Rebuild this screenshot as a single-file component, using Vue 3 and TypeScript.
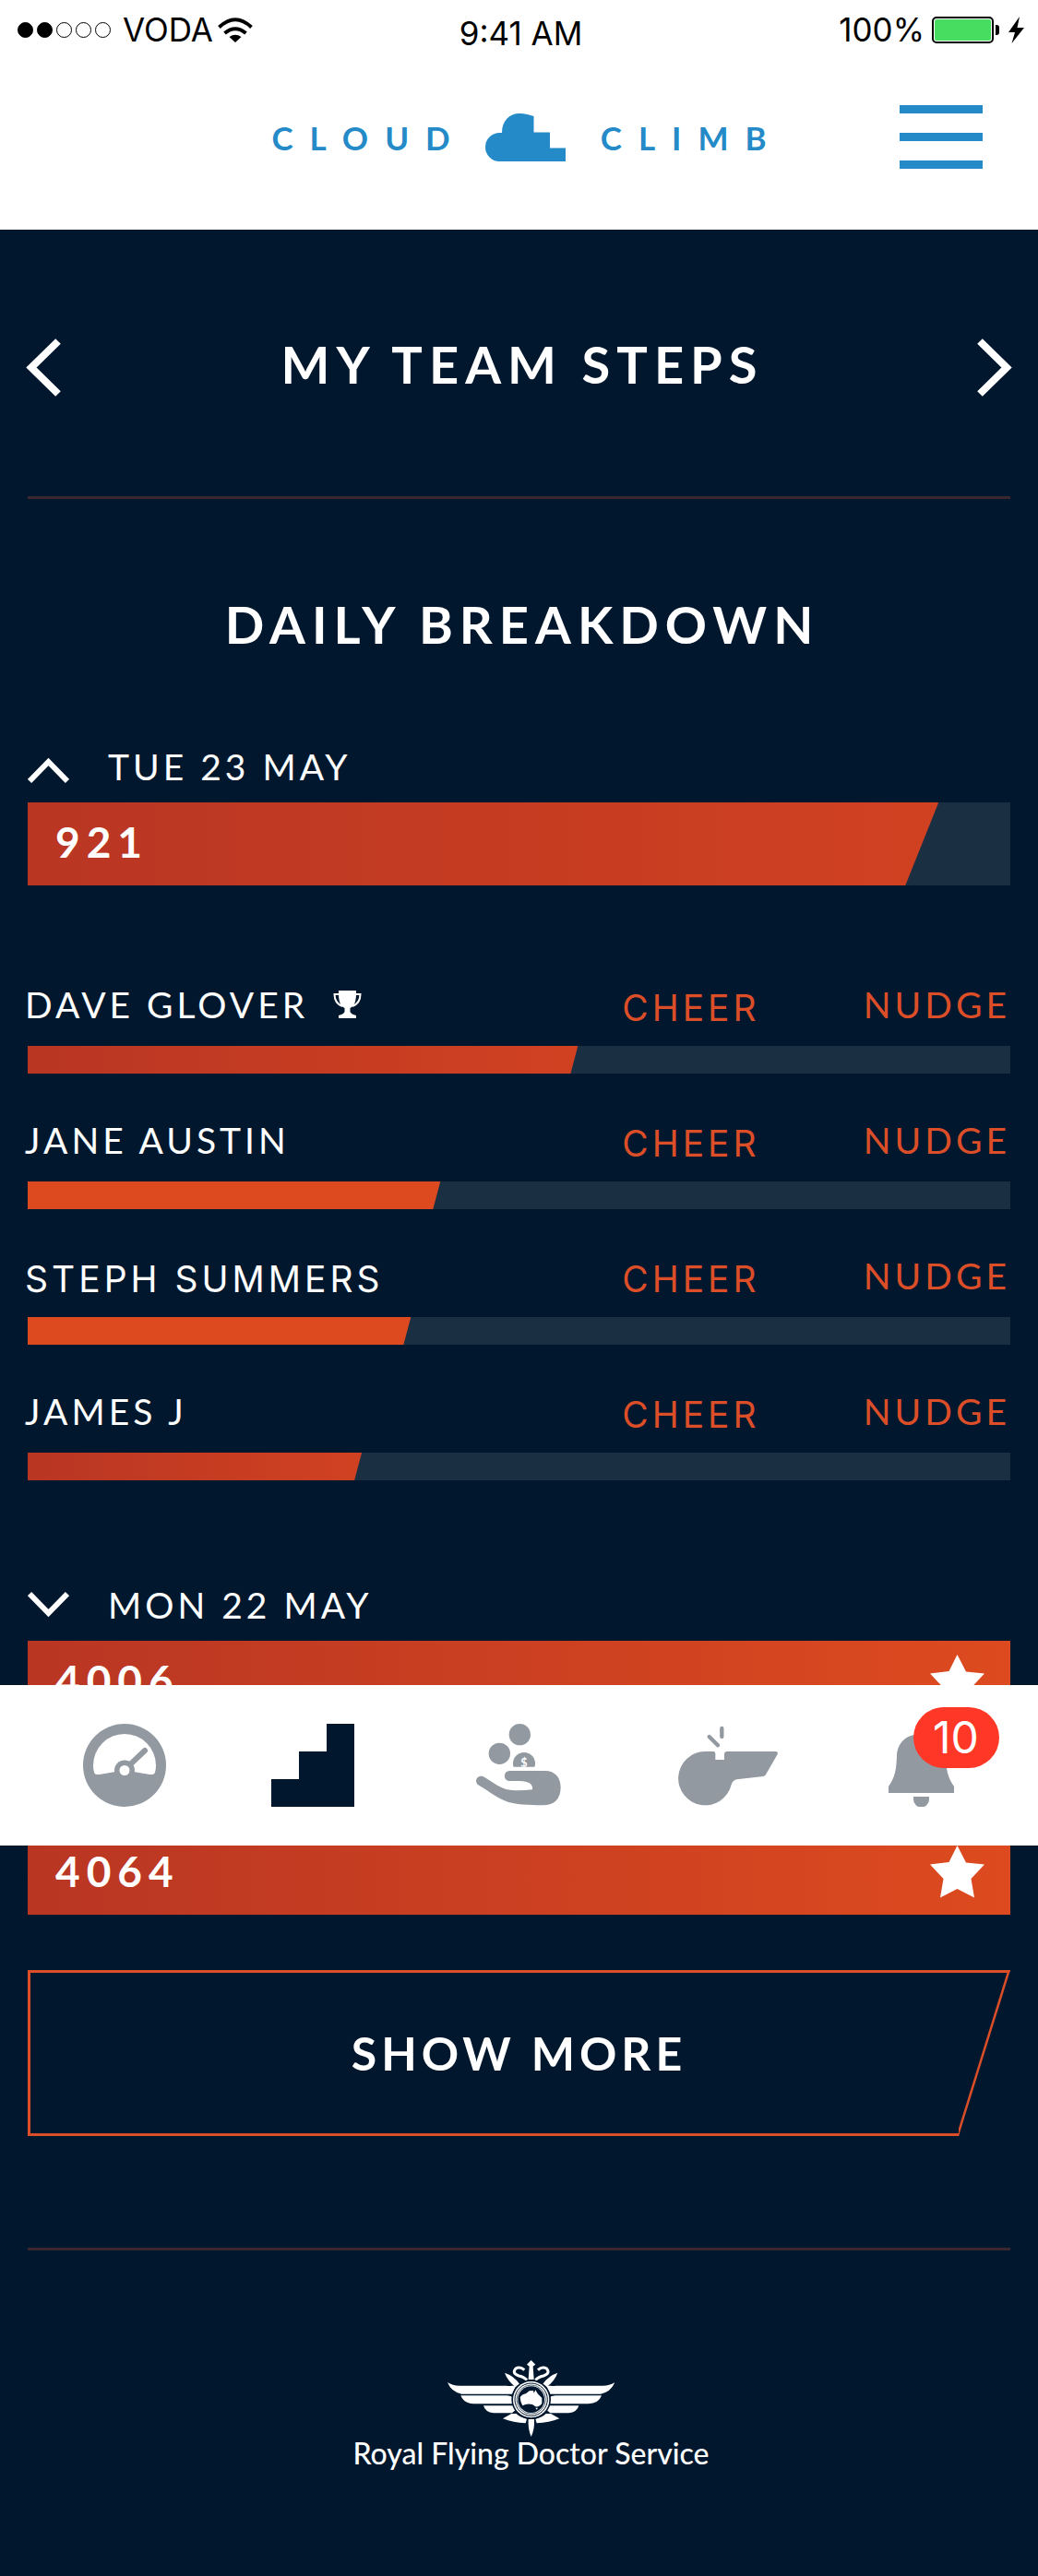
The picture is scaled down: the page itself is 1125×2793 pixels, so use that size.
<script setup lang="ts">
interface Member {
  name: string
  share: number
  leader?: boolean
  solid?: boolean
  system?: boolean
}

interface Day {
  date?: string
  steps: number
}

const signal: boolean[] = [true, true, false, false, false]

const today = { date: 'TUE 23 MAY', steps: 921, share: 92.7 }

const members: Member[] = [
  { name: 'DAVE GLOVER', share: 56, leader: true },
  { name: 'JANE AUSTIN', share: 42, solid: true },
  { name: 'STEPH SUMMERS', share: 39, solid: true, system: true },
  { name: 'JAMES J', share: 34 },
]

const monday: Day = { date: 'MON 22 MAY', steps: 4006 }
const earlier: Day = { steps: 4064 }

const starPoints =
  '29.5,0 39,18.5 59,20.5 44.5,36 48,56.5 29.5,47 11,56.5 14.5,36 0,20.5 20.5,18'
</script>

<template>
  <div class="app">
    <header class="top">
      <div class="status">
        <div class="status-left">
          <span class="signal">
            <i v-for="(on, i) in signal" :key="i" class="dot" :class="{ on }"></i>
          </span>
          <span class="carrier">VODA</span>
          <svg class="wifi" width="38" height="27" viewBox="0 0 38 27" fill="none" stroke="#000" stroke-width="4" aria-hidden="true">
            <path d="M1.5 10.5Q19-6 36.500 10.500" />
            <path d="M7.500 17Q19 7.500 30.500 17" />
            <path d="M12.500 21Q19 16.500 25.500 21L19 27Z" fill="#000" stroke="none" />
          </svg>
        </div>
        <div class="time">9:41 AM</div>
        <div class="status-right">
          <span>100%</span>
          <svg class="battery" width="75" height="29" viewBox="0 0 75 29" aria-hidden="true">
            <rect x="1" y="1" width="65" height="27" rx="4" fill="#fff" stroke="#000" stroke-width="2" />
            <rect x="3" y="3" width="61" height="23" rx="2" fill="#47dd60" />
            <path d="M69 9H70Q73 9 73 12V17Q73 20 70 20H69Z" fill="#000" />
          </svg>
          <svg class="bolt" width="17" height="29" viewBox="0 0 17 29" aria-hidden="true">
            <path d="M12 0L0 17H7L3.500 29L17 12H9.500Z" />
          </svg>
        </div>
      </div>
      <div class="brand-row">
        <a class="brand" href="#home" aria-label="Cloud Climb">
          <span>CLOUD</span>
          <svg class="cloud" width="87" height="52" viewBox="0 0 87 52" fill="#248ac8" aria-hidden="true">
            <path d="M15.500 52A15.500 15.500 0 0 1 15.500 21H18C18 8 26 0 37 0C43 0 48 1.500 52.500 3V20.500H70V37.500H87V52Z" />
          </svg>
          <span>CLIMB</span>
        </a>
        <button class="menu" type="button" aria-label="Menu">
          <i></i><i></i><i></i>
        </button>
      </div>
    </header>

    <main class="content">
      <div class="title-row">
        <button type="button" aria-label="Previous">
          <svg width="38" height="63" viewBox="0 0 38 63" fill="none" stroke="#fff" stroke-width="8">
            <path d="M35 3L6 31.500L35 60" />
          </svg>
        </button>
        <h1>MY TEAM STEPS</h1>
        <button type="button" aria-label="Next">
          <svg width="38" height="63" viewBox="0 0 38 63" fill="none" stroke="#fff" stroke-width="8">
            <path d="M3 3L32 31.500L3 60" />
          </svg>
        </button>
      </div>

      <hr />

      <h2>DAILY BREAKDOWN</h2>

      <section>
        <button class="day-head" type="button" aria-expanded="true">
          <svg width="45" height="48" viewBox="0 0 45 48" fill="none" stroke="#fff" stroke-width="6">
            <path d="M2 40L22.500 19L43 40" />
          </svg>
          <span>{{ today.date }}</span>
        </button>
        <div class="total">
          <div class="total-fill partial" :style="{ width: today.share + '%' }"></div>
          <span class="steps">{{ today.steps }}</span>
        </div>

        <ul class="members">
          <li v-for="m in members" :key="m.name">
            <div class="member-line">
              <span class="name" :class="{ system: m.system }">
                {{ m.name }}
                <svg v-if="m.leader" class="trophy" width="31" height="30" viewBox="0 0 31 30" aria-hidden="true">
                  <path fill="#fff" d="M6 0H25V3C25 12 23 17 18.500 19V23C19 25 22 26 25 27V30H6V27C9 26 12 25 12.500 23V19C8 17 6 12 6 3Z" />
                  <path fill="none" stroke="#fff" stroke-width="2" d="M7 4H1.500C1.500 11 5 15 10 17M24 4H29.500C29.500 11 26 15 21 17" />
                </svg>
              </span>
              <button class="action system" type="button">CHEER</button>
              <button class="action" type="button">NUDGE</button>
            </div>
            <div class="track">
              <div class="fill" :class="{ solid: m.solid }" :style="{ width: m.share + '%' }"></div>
            </div>
          </li>
        </ul>
      </section>

      <section class="past">
        <button class="day-head" type="button" aria-expanded="false">
          <svg width="45" height="48" viewBox="0 0 45 48" fill="none" stroke="#fff" stroke-width="6">
            <path d="M2 12L22.500 33L43 12" />
          </svg>
          <span>{{ monday.date }}</span>
        </button>
        <div class="total">
          <div class="total-fill full"></div>
          <span class="steps">{{ monday.steps }}</span>
          <svg class="star" width="60" height="57" viewBox="0 0 60 57" aria-hidden="true"><polygon fill="#fff" :points="starPoints" /></svg>
        </div>
      </section>

      <nav class="tabs" aria-label="Main">
        <a href="#dashboard" aria-label="Dashboard">
          <svg width="90" height="90" viewBox="0 0 90 90">
            <circle cx="45" cy="45" r="45" fill="#9299a1" />
            <path fill="#fff" d="M11 45A34 34 0 0 1 79 45Q79 55 75 55Q72 55.500 45 50Q18 55.500 15 55Q11 55 11 45Z" />
            <path d="M47 48L67 29" stroke="#9299a1" stroke-width="6" stroke-linecap="round" />
            <circle cx="45" cy="50.500" r="11" fill="#9299a1" />
            <circle cx="45" cy="50.500" r="5.500" fill="#fff" />
          </svg>
        </a>
        <a href="#steps" aria-label="Steps" aria-current="page">
          <svg width="90" height="90" viewBox="0 0 90 90"><path fill="#00172d" d="M0 90V60H30V30H60V0H90V90Z" /></svg>
        </a>
        <a href="#donate" aria-label="Donate">
          <svg width="92" height="90" viewBox="48 57 276 270" fill="#9299a1">
            <defs><clipPath id="coin-cut"><rect x="160" y="140" width="90" height="57" /></clipPath></defs>
            <circle cx="190" cy="92" r="35" />
            <circle cx="124" cy="154" r="35" />
            <g clip-path="url(#coin-cut)">
              <circle cx="204" cy="186" r="36" />
              <text x="204" y="198" class="coin" text-anchor="middle" fill="#fff">$</text>
            </g>
            <path d="M157 210H272C305 210 323 232 323 264C323 300 303 322 265 322C220 321 175 322 140 307C110 294 80 270 55 256C40 244 52 222 70 228C95 242 120 262 145 270C172 276 200 274 231 271C233 254 222 244 190 243H157A16.500 16.500 0 0 1 157 210Z" />
          </svg>
        </a>
        <a href="#challenges" aria-label="Challenges">
          <svg width="108" height="90" viewBox="705 57 324 270" fill="#9299a1">
            <path d="M792 147H820Q826 148 826 154V174H855V154Q856 148 862 147H1022Q1031 148 1028 156L990 222Q988 227 982 228L895 238Q882 241 878 255A87.500 87.500 0 1 1 792 147Z" />
            <path d="M847 72V99M806 99L834 127" fill="none" stroke="#9299a1" stroke-width="13" stroke-linecap="round" />
          </svg>
        </a>
        <a href="#alerts" aria-label="Notifications">
          <span class="bell">
            <svg width="71" height="90" viewBox="0 0 71 90" fill="#9299a1">
              <path d="M0 75V68C7 58 8.500 50 9 34C10 20 20 11 35.500 11S61 20 62 34C62.500 50 64 58 71 68V75Z" />
              <path d="M27 79H44V82A8.500 8.500 0 0 1 27 82Z" />
            </svg>
            <span class="badge">10</span>
          </span>
        </a>
      </nav>

      <section>
        <div class="total">
          <div class="total-fill full"></div>
          <span class="steps">{{ earlier.steps }}</span>
          <svg class="star" width="60" height="57" viewBox="0 0 60 57" aria-hidden="true"><polygon fill="#fff" :points="starPoints" /></svg>
        </div>
      </section>

      <button class="more" type="button">SHOW MORE</button>

      <hr class="foot-rule" />

      <footer>
        <svg width="181" height="83" viewBox="406 87 543 249" fill="#fff" aria-hidden="true">
          <defs>
            <g id="wing">
              <path d="M406 159Q422 170 445 170H598Q612 172 630 168L616 197H452Q418 190 406 159Z" />
              <path d="M449 202H600Q612 203 620 208V229H492Q458 228 449 202Z" />
              <path d="M523 235H620L630 247L616 259H556Q528 256 523 235Z" />
              <path d="M614 261L586 277Q620 290 660 292L664 278Q640 272 630 261Z" />
              <path d="M592 128Q622 138 640 164L628 174Q602 156 592 128Z" />
              <path d="M656 119Q642 106 628 114Q614 130 638 138Q656 142 664 152" fill="none" stroke="#fff" stroke-width="9" />
            </g>
          </defs>
          <use href="#wing" />
          <use href="#wing" transform="translate(1356 0) scale(-1 1)" />
          <path d="M678 87L692 101L684 107L687 150H669L672 107L664 101Z" />
          <path d="M669 279H688Q690 310 678 336Q667 310 669 279Z" />
          <circle cx="678" cy="215" r="64" fill="#00172d" />
          <circle cx="678" cy="215" r="59" />
          <circle cx="678" cy="215" r="53" fill="none" stroke="#00172d" stroke-width="3" />
          <circle cx="678" cy="215" r="47" fill="none" stroke="#00172d" stroke-width="2" />
          <circle cx="678" cy="215" r="43" fill="#00172d" />
          <path d="M642 208Q648 198 662 195L672 187L685 186L687 194L692 184L699 196L713 210V228Q704 240 692 238L682 231Q664 226 650 235Q643 224 642 208ZM692 242H700L696 248Z" />
        </svg>
        <p>Royal Flying Doctor Service</p>
      </footer>
    </main>
  </div>
</template>

<style>
html,
body {
  margin: 0;
  background: #00172d;
}
</style>

<style scoped>
.app {
  font-family: Lato, "Open Sans", sans-serif;
  color: #fff;
  background: #00172d;
}
.app button {
  appearance: none;
  margin: 0;
  padding: 0;
  border: 0;
  background: none;
  color: inherit;
  font: inherit;
  cursor: pointer;
}
svg {
  display: block;
  flex: none;
}
a {
  color: inherit;
  text-decoration: none;
}
.top {
  background: #fff;
  color: #000;
}
.status {
  display: grid;
  grid-template-columns: 1fr auto 1fr;
  align-items: start;
  height: 64px;
  padding: 0 15px 0 19px;
  font-family: Inter, sans-serif;
  font-size: 35px;
  line-height: 64px;
}
.status-left,
.status-right {
  display: flex;
  align-items: center;
}
.status-right {
  justify-content: flex-end;
}
.signal {
  display: flex;
  gap: 4px;
  margin-right: 13px;
}
.dot {
  box-sizing: border-box;
  width: 17px;
  height: 17px;
  border: 1px solid #000;
  border-radius: 50%;
}
.dot.on {
  background: #000;
}
.wifi {
  margin-left: 5px;
}
.time {
  padding-top: 4px;
}
.battery {
  margin: 0 8px;
}
.brand-row {
  display: grid;
  grid-template-columns: 1fr auto 1fr;
  align-items: center;
  height: 169px;
  padding: 0 60px 16px;
}
.brand {
  grid-column: 2;
  display: flex;
  align-items: center;
  color: #248ac8;
  font-size: 35px;
  font-weight: 700;
  line-height: 48px;
  letter-spacing: 18px;
}
.brand span:last-child {
  margin-right: -18px;
}
.cloud {
  margin: 0 38px 0 20px;
}
.menu {
  display: flex;
  flex-direction: column;
  gap: 21px;
  justify-self: end;
  width: 90px;
}
.menu i {
  height: 9px;
  background: #248ac8;
}
.content {
  padding: 112px 30px 115px;
}
.title-row {
  display: flex;
  justify-content: space-between;
  height: 75px;
  margin: 0 -2px;
}
h1,
h2 {
  margin: 0;
  padding-left: 7px;
  font-size: 56px;
  font-weight: 700;
  line-height: 68px;
  letter-spacing: 7px;
  text-align: center;
}
hr {
  height: 3px;
  margin: 102px 0;
  border: 0;
  background: #3a272f;
}
h2 {
  margin-bottom: 96px;
}
.app .day-head {
  display: flex;
  align-items: center;
  gap: 42px;
  margin-bottom: 15px;
  font-size: 39px;
  line-height: 48px;
  letter-spacing: 4px;
}
.total {
  display: grid;
  grid-template-columns: 1fr auto;
  height: 90px;
  background: #1b2f42;
}
.total > * {
  grid-row: 1;
}
.total-fill {
  grid-column: 1 / -1;
}
.partial {
  background: linear-gradient(90deg, #b93623, #d04121);
  clip-path: polygon(0 0, 100% 0, calc(100% - 36px) 100%, 0 100%);
}
.full {
  background: linear-gradient(90deg, #b93623, #dd4a1f);
}
.steps {
  z-index: 1;
  grid-column: 1;
  padding-left: 30px;
  font-size: 46px;
  font-weight: 700;
  line-height: 86px;
  letter-spacing: 7px;
}
.star {
  grid-column: 2;
  margin: 15px 27px 0 0;
}
.members {
  display: flex;
  flex-direction: column;
  gap: 48px;
  margin: 105px 0 111px;
  padding: 0;
  list-style: none;
}
.member-line {
  display: grid;
  grid-template-columns: 645fr 262fr 158fr;
  align-items: start;
  height: 56px;
  margin-bottom: 13px;
  font-size: 39px;
  line-height: 48px;
  letter-spacing: 4px;
}
.name {
  display: flex;
  align-items: center;
  gap: 27px;
  margin-left: -3px;
}
.app .action {
  color: #dc4e28;
  text-align: left;
  letter-spacing: 4px;
}
.app .system {
  padding-top: 4px;
  font-family: Inter, sans-serif;
}
.track {
  height: 30px;
  background: #1b2f42;
}
.fill {
  height: 30px;
  background: linear-gradient(90deg, #b93623, #d04121);
  clip-path: polygon(0 0, 100% 0, calc(100% - 8px) 100%, 0 100%);
}
.fill.solid {
  background: #dd4a1f;
}
.tabs {
  position: relative;
  z-index: 2;
  display: grid;
  grid-template-columns: 204fr 204fr 242fr 212fr 206fr;
  place-items: center;
  height: 174px;
  margin: -42px -30px -15px;
  padding: 0 24px 0 33px;
  box-sizing: border-box;
  background: #fff;
}
.coin {
  font-family: Lato, sans-serif;
  font-size: 38px;
  font-weight: 700;
}
.bell {
  position: relative;
  display: block;
}
.badge {
  position: absolute;
  top: -18px;
  left: 27px;
  width: 93px;
  height: 66px;
  border-radius: 33px;
  background: #ff3726;
  font-family: Inter, sans-serif;
  font-size: 48px;
  line-height: 66px;
  text-align: center;
}
.app .more {
  display: block;
  width: 100%;
  height: 180px;
  margin-top: 60px;
  background:
    linear-gradient(#dc4e28, #dc4e28) left / 3px 100% no-repeat,
    linear-gradient(#dc4e28, #dc4e28) top / 100% 3px no-repeat,
    linear-gradient(#dc4e28, #dc4e28) bottom / 100% 3px no-repeat,
    linear-gradient(to bottom right, transparent calc(50% - 3px), #dc4e28 calc(50% - 2px)) right / 56px 100% no-repeat;
  clip-path: polygon(0 0, 100% 0, calc(100% - 56px) 100%, 0 100%);
  font-size: 50px;
  font-weight: 700;
  letter-spacing: 5px;
}
.foot-rule {
  margin: 121px 0 119px;
}
footer {
  display: flex;
  flex-direction: column;
  align-items: center;
  padding-left: 26px;
}
footer p {
  margin: 0;
  font-size: 32px;
  font-weight: 500;
  line-height: 36px;
}
</style>
